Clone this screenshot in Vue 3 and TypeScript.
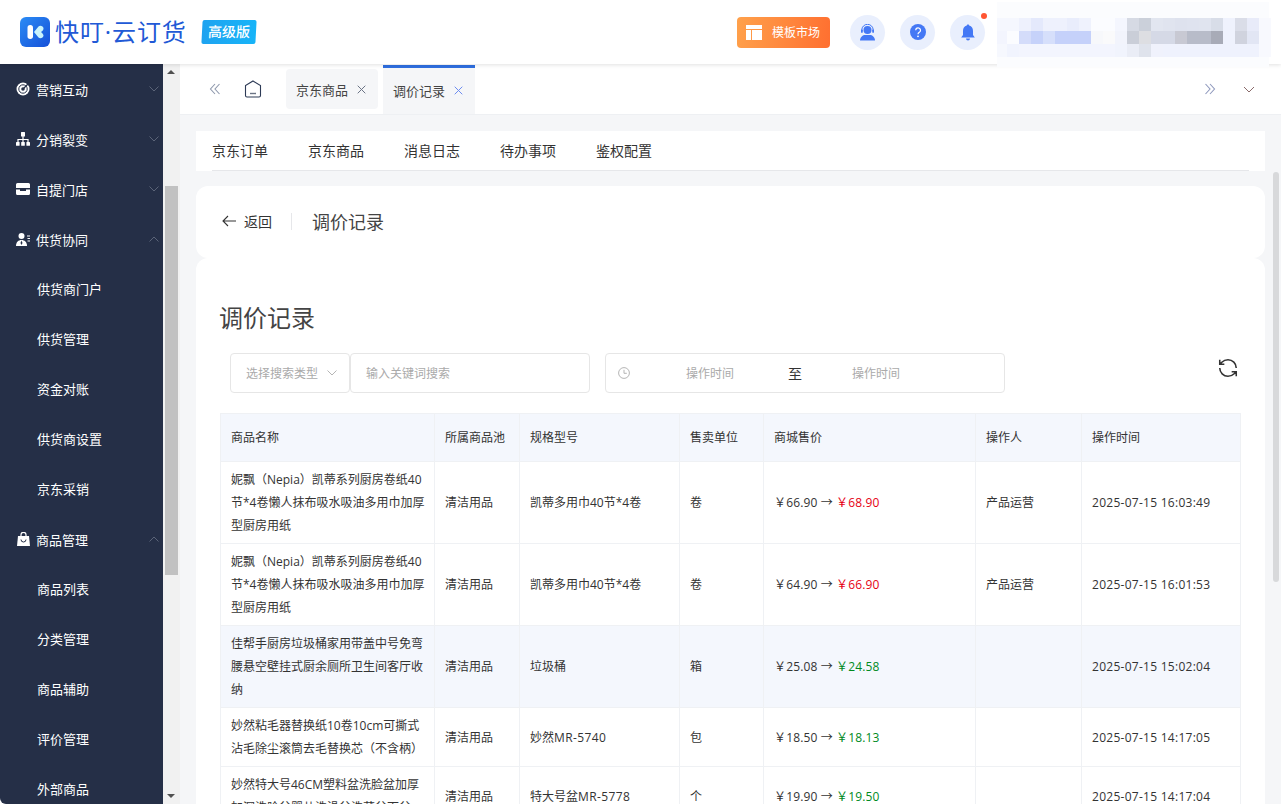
<script setup lang="ts">
interface MenuItem { label: string; icon?: string; open?: boolean }
interface Row { name: string; pool: string; spec: string; model?: string; unit: string; from: string; to: string; up: boolean; op: string; time: string; hl?: boolean }

const menu: MenuItem[] = [
  { label: '营销互动', icon: 'target' },
  { label: '分销裂变', icon: 'tree' },
  { label: '自提门店', icon: 'store' },
  { label: '供货协同', icon: 'user', open: true },
  { label: '供货商门户' },
  { label: '供货管理' },
  { label: '资金对账' },
  { label: '供货商设置' },
  { label: '京东采销' },
  { label: '商品管理', icon: 'bag', open: true },
  { label: '商品列表' },
  { label: '分类管理' },
  { label: '商品辅助' },
  { label: '评价管理' },
  { label: '外部商品' },
]

const subnav = ['京东订单', '京东商品', '消息日志', '待办事项', '鉴权配置']
const heads = ['商品名称', '所属商品池', '规格型号', '售卖单位', '商城售价', '操作人', '操作时间']
const colWidths = [214, 85, 160, 84, 212, 106, 159]

const nepia = '妮飘（Nepia）凯蒂系列厨房卷纸40节*4卷懒人抹布吸水吸油多用巾加厚型厨房用纸'
const rows: Row[] = [
  { name: nepia, pool: '清洁用品', spec: '凯蒂多用巾40节*4卷', unit: '卷', from: '66.90', to: '68.90', up: true, op: '产品运营', time: '2025-07-15 16:03:49' },
  { name: nepia, pool: '清洁用品', spec: '凯蒂多用巾40节*4卷', unit: '卷', from: '64.90', to: '66.90', up: true, op: '产品运营', time: '2025-07-15 16:01:53' },
  { name: '佳帮手厨房垃圾桶家用带盖中号免弯腰悬空壁挂式厨余厕所卫生间客厅收纳', pool: '清洁用品', spec: '垃圾桶', unit: '箱', from: '25.08', to: '24.58', up: false, op: '', time: '2025-07-15 15:02:04', hl: true },
  { name: '妙然粘毛器替换纸10卷10cm可撕式沾毛除尘滚筒去毛替换芯（不含柄）', pool: '清洁用品', spec: '妙然', model: 'MR-5740', unit: '包', from: '18.50', to: '18.13', up: false, op: '', time: '2025-07-15 14:17:05' },
  { name: '妙然特大号46CM塑料盆洗脸盆加厚加深洗脸盆婴儿洗澡盆洗菜盆面盆', pool: '清洁用品', spec: '特大号盆', model: 'MR-5778', unit: '个', from: '19.90', to: '19.50', up: false, op: '', time: '2025-07-15 14:17:04' },
]

const mosaic: string[][] = [
  ['#f5f7fe', '#f5f7fe', '#eef1fd', '#e4e9fc', '#eef1fd', '#eef1fd', '#e9edfc', '#eff2fd', '#fbfcff', '#fbfcff', '#f4f6fe', '#d6dae4', '#cbd0da', '#e2e6f0', '#e0e4ef', '#dee2ee', '#dfe3ef', '#e0e4ef', '#d8dde8', '#eff2fd', '#dadde8', '#e8ebf9', '#f8f9fe'],
  ['#f3f5fe', '#fbfcff', '#d4dcfa', '#c6d2fa', '#d6dffb', '#c5d1fa', '#c5d1fa', '#c5d1fa', '#f7f8fb', '#fafafb', '#f2f4fc', '#caced8', '#dddee2', '#d5d9e6', '#d5d9e6', '#c8c9d3', '#b8bcc9', '#b8bcc9', '#a8abb7', '#eff2fd', '#d0d3de', '#e2e6f4', '#f8f9fe'],
  ['#f6f8fe', '#f1f4fe', '#f3f5fe', '#f3f5fe', '#f3f5fe', '#f3f5fe', '#f3f5fe', '#f3f5fe', '#f3f5fe', '#f3f5fe', '#f1f4fd', '#eaedf6', '#dfe3ec', '#f0f2fc', '#eff2fd', '#eff2fd', '#eff2fd', '#eff2fd', '#eff2fd', '#eff2fd', '#eff2fd', '#eff2fd', '#f8f9fe'],
]
</script>

<template>
  <div class="app">
    <header class="topbar">
      <div class="brand">
        <svg class="logo" viewBox="0 0 30 30">
          <defs>
            <linearGradient id="lg" x1="0" y1="0" x2="1" y2="1">
              <stop offset="0" stop-color="#2b8cf5" />
              <stop offset="1" stop-color="#1550d8" />
            </linearGradient>
          </defs>
          <rect width="30" height="30" rx="6" fill="url(#lg)" />
          <rect x="7.500" y="8" width="5.500" height="14" rx="2.700" fill="#fff" />
          <path d="M14 15 L18.500 9.500 C20 8 23.500 9 23.500 11.500 C23.500 12.500 23 13.200 22.300 14 L21 15 L22.300 16.200 C23 17 23.500 17.700 23.500 18.600 C23.500 21 20 22 18.500 20.500 Z" fill="#c9f3fb" />
        </svg>
        <span class="brand-name">快叮·云订货</span>
        <span class="badge">高级版</span>
      </div>
      <div class="top-actions">
        <button class="market">
          <svg width="16" height="15" viewBox="0 0 16 15"><path d="M0 0h16v4H0zM0 5h5v10H0zM6 5h10v10H6z" fill="#fff" /></svg>
          <span>模板市场</span>
        </button>
        <span class="circle">
          <svg width="17" height="17" viewBox="0 0 17 17">
            <circle cx="8.500" cy="6" r="4" fill="#4478f5" />
            <path d="M2.800 7V6a5.700 5.700 0 0 1 11.400 0v1" fill="none" stroke="#4478f5" stroke-width="1" />
            <rect x="2" y="5.500" width="1.800" height="3.400" rx=".8" fill="#4478f5" />
            <rect x="13.200" y="5.500" width="1.800" height="3.400" rx=".8" fill="#4478f5" />
            <path d="M1 16.500c0-3.500 3-5.500 5-5.500h5c2 0 5 2 5 5.500z" fill="#4478f5" />
          </svg>
        </span>
        <span class="circle">
          <svg width="16" height="16" viewBox="0 0 16 16">
            <circle cx="8" cy="8" r="8" fill="#4478f5" />
            <path d="M5.700 6.200A2.400 2.400 0 1 1 9.300 8.300C8.400 8.800 8 9.300 8 10.300" fill="none" stroke="#fff" stroke-width="1.200" />
            <circle cx="8" cy="12.300" r=".9" fill="#fff" />
          </svg>
        </span>
        <span class="circle bell">
          <svg width="14" height="17" viewBox="0 0 14 17">
            <path d="M7 0.500c.8 0 1.200.5 1.200 1.100C10.800 2.200 12 4.500 12 7v4l1.800 2.500H.2L2 11V7c0-2.500 1.200-4.800 3.800-5.400C5.800 1 6.200.5 7 .5z" fill="#4478f5" />
            <path d="M5 14.500h4a2 2 0 0 1-4 0z" fill="#4478f5" />
          </svg>
          <i class="dot"></i>
        </span>
      </div>
      <div class="blurred">
        <div v-for="(row, r) in mosaic" :key="r" class="mosaic-row">
          <i v-for="(c, i) in row" :key="i" :style="{ background: c }"></i>
        </div>
      </div>
    </header>

    <div class="body">
      <aside class="sidebar">
        <div
          v-for="m in menu"
          :key="m.label"
          class="menu-item"
          :class="{ sub: !m.icon }"
        >
          <span v-if="m.icon" class="m-icon">
            <svg v-if="m.icon === 'target'" width="14" height="14" viewBox="0 0 14 14">
              <circle cx="7" cy="7" r="6.500" fill="#fff" />
              <circle cx="7" cy="7" r="4.200" fill="none" stroke="#252f47" stroke-width="1" />
              <circle cx="7" cy="7" r="1.800" fill="#252f47" />
              <path d="M7 7l5-5" stroke="#252f47" stroke-width="1.200" />
            </svg>
            <svg v-else-if="m.icon === 'tree'" width="14" height="14" viewBox="0 0 14 14">
              <rect x="5" y="0" width="4" height="4.500" rx=".6" fill="#fff" />
              <path d="M7 4v3M2 10V7.500h10V10M7 7v3" fill="none" stroke="#fff" stroke-width="1.200" />
              <rect x="0" y="10" width="3.600" height="3.800" rx=".6" fill="#fff" />
              <rect x="5.200" y="10" width="3.600" height="3.800" rx=".6" fill="#fff" />
              <rect x="10.400" y="10" width="3.600" height="3.800" rx=".6" fill="#fff" />
            </svg>
            <svg v-else-if="m.icon === 'store'" width="14" height="12" viewBox="0 0 14 12">
              <path d="M1.500 0h11A1.500 1.500 0 0 1 14 1.500V5H0V1.500A1.500 1.500 0 0 1 1.500 0z" fill="#fff" />
              <path d="M0 6.500h4v1.500h6V6.500h4V10.500A1.500 1.500 0 0 1 12.500 12h-11A1.500 1.500 0 0 1 0 10.500z" fill="#fff" />
            </svg>
            <svg v-else-if="m.icon === 'user'" width="14" height="13" viewBox="0 0 14 13">
              <circle cx="5.500" cy="3" r="3" fill="#fff" />
              <path d="M0 13c0-4 2.500-6 5.500-6s5.500 2 5.500 6z" fill="#fff" />
              <path d="M5.500 7.500l-1 2.500 1 2 1-2z" fill="#252f47" />
              <path d="M11 3h3M11.500 5.500H14M11.500 8H14" stroke="#fff" stroke-width="1" />
            </svg>
            <svg v-else width="13" height="14" viewBox="0 0 13 14">
              <path d="M1 4h11l1 10H0z" fill="#fff" />
              <path d="M4 4V2.800a2.500 2.500 0 0 1 5 0V4" fill="none" stroke="#fff" stroke-width="1.200" />
              <path d="M4 7.500a2.500 2.500 0 0 0 5 0" fill="none" stroke="#252f47" stroke-width="1" />
            </svg>
          </span>
          <span>{{ m.label }}</span>
          <svg v-if="m.icon" class="m-chev" width="10" height="6" viewBox="0 0 10 6">
            <path :d="m.open ? 'M.5 5.500 5 1l4.500 4.500' : 'M.5.5 5 5 9.500.5'" fill="none" stroke="#5b6478" stroke-width="1" />
          </svg>
        </div>
      </aside>

      <div class="side-scroll">
        <i class="arrow-up"></i>
        <i class="thumb"></i>
        <i class="arrow-down"></i>
      </div>

      <main class="main">
        <nav class="tabs">
          <svg class="tab-ctl first" width="14" height="12" viewBox="0 0 14 12">
            <path d="M7 1 2.500 6 7 11M11.500 1 7 6l4.500 5" fill="none" stroke="#8f99ad" stroke-width="1.100" />
          </svg>
          <svg class="home" width="18" height="18" viewBox="0 0 18 18">
            <path d="M9 1 16.500 5.500v10a1.500 1.500 0 0 1-1.500 1.500H3a1.500 1.500 0 0 1-1.500-1.500v-10z" fill="none" stroke="#2c3a55" stroke-width="1.100" />
            <path d="M6 13.500h6" stroke="#6b7485" stroke-width="1.400" />
          </svg>
          <div class="tab">
            <span>京东商品</span>
            <svg width="9" height="9" viewBox="0 0 9 9"><path d="M.7.7l7.600 7.600M8.300.7.700 8.300" stroke="#6b7485" stroke-width="1" /></svg>
          </div>
          <div class="tab active">
            <span>调价记录</span>
            <svg width="9" height="9" viewBox="0 0 9 9"><path d="M.7.7l7.600 7.600M8.300.7.700 8.300" stroke="#6d8cf0" stroke-width="1" /></svg>
          </div>
          <div class="tab-right">
            <svg width="14" height="12" viewBox="0 0 14 12">
              <path d="M2.500 1 7 6l-4.500 5M7 1l4.500 5L7 11" fill="none" stroke="#8f99bd" stroke-width="1.100" />
            </svg>
            <svg width="12" height="7" viewBox="0 0 12 7">
              <path d="M1 1l5 5 5-5" fill="none" stroke="#8a6a6a" stroke-width="1" />
            </svg>
          </div>
        </nav>

        <div class="scroll">
          <div class="subnav">
            <a v-for="s in subnav" :key="s">{{ s }}</a>
          </div>

          <section class="page-head">
            <svg class="back" width="14" height="12" viewBox="0 0 14 12">
              <path d="M6 1 1 6l5 5M1 6h13" fill="none" stroke="#333" stroke-width="1.100" />
            </svg>
            <span class="back-text">返回</span>
            <i class="sep"></i>
            <span class="head-title">调价记录</span>
          </section>

          <section class="panel">
            <h1 class="panel-title">调价记录</h1>
            <div class="filters">
              <div class="field select">
                <span>选择搜索类型</span>
                <svg width="10" height="6" viewBox="0 0 10 6"><path d="M.5.500 5 5 9.500.500" fill="none" stroke="#b5b5b5" stroke-width="1" /></svg>
              </div>
              <div class="field keyword"><span>输入关键词搜索</span></div>
              <div class="field date">
                <svg class="clock" width="12" height="12" viewBox="0 0 12 12">
                  <circle cx="6" cy="6" r="5.400" fill="none" stroke="#b5b5b5" stroke-width="1" />
                  <path d="M6 2.800V6.300h2.800" fill="none" stroke="#b5b5b5" stroke-width="1" />
                </svg>
                <span class="d-a">操作时间</span>
                <span class="d-to">至</span>
                <span class="d-b">操作时间</span>
              </div>
              <svg class="refresh" width="22" height="22" viewBox="0 0 24 24">
                <path d="M21 12a9 9 0 0 0-9-9 9.750 9.750 0 0 0-6.740 2.740L3 8M3 3v5h5M3 12a9 9 0 0 0 9 9 9.750 9.750 0 0 0 6.740-2.740L21 16M16 16h5v5" fill="none" stroke="#333" stroke-width="1.700" />
              </svg>
            </div>

            <table class="grid">
              <colgroup>
                <col v-for="(w, i) in colWidths" :key="i" :style="{ width: w + 'px' }" />
              </colgroup>
              <thead>
                <tr><th v-for="h in heads" :key="h">{{ h }}</th></tr>
              </thead>
              <tbody>
                <tr v-for="(r, i) in rows" :key="i" :class="{ hl: r.hl }">
                  <td class="name">{{ r.name }}</td>
                  <td>{{ r.pool }}</td>
                  <td>{{ r.spec }}<span v-if="r.model" class="wide">{{ r.model }}</span></td>
                  <td>{{ r.unit }}</td>
                  <td class="price">￥{{ r.from }} → <span :class="r.up ? 'up' : 'down'">￥{{ r.to }}</span></td>
                  <td>{{ r.op }}</td>
                  <td class="time">{{ r.time }}</td>
                </tr>
              </tbody>
            </table>
          </section>
        </div>
        <i class="main-thumb"></i>
      </main>
    </div>
  </div>
</template>

<style>
html, body { margin: 0; padding: 0; overflow: hidden; background: #fff; }
</style>

<style scoped>
.app {
  width: 1281px;
  height: 804px;
  overflow: hidden;
  display: flex;
  flex-direction: column;
  font-family: "Open Sans", "Noto Sans CJK SC", sans-serif;
  color: #333;
  font-size: 12px;
}
.topbar {
  position: relative;
  z-index: 3;
  height: 64px;
  flex: none;
  background: #fff;
  box-shadow: 0 1px 4px rgba(0, 0, 0, .12);
  display: flex;
  align-items: center;
}
.brand { display: flex; align-items: center; padding-left: 20px; }
.logo { width: 30px; height: 30px; }
.brand-name { margin-left: 5px; font-size: 24px; letter-spacing: .9px; color: #2159d6; line-height: 30px; }
.badge {
  margin-left: 15px;
  width: 54px;
  height: 24px;
  line-height: 24px;
  text-align: center;
  color: #fff;
  font-size: 14px;
  font-weight: 500;
  background: linear-gradient(90deg, #1ea3f0, #17b4f8);
  border-radius: 2px;
  transform: skewX(-3deg);
}
.top-actions { position: absolute; left: 737px; top: 0; height: 64px; display: flex; align-items: center; }
.market {
  width: 93px;
  height: 31px;
  border: 0;
  border-radius: 4px;
  background: linear-gradient(100deg, #ffa14b, #ff6f30);
  color: #fff;
  font: inherit;
  font-size: 12px;
  display: flex;
  align-items: center;
  padding: 0 0 0 9px;
  gap: 10px;
  margin-right: 20px;
}
.circle {
  position: relative;
  width: 35px;
  height: 35px;
  border-radius: 50%;
  background: #e9effd;
  display: flex;
  align-items: center;
  justify-content: center;
  margin-right: 15px;
}
.dot { position: absolute; right: -2px; top: -2px; width: 6px; height: 6px; border-radius: 50%; background: #ff5533; }
.blurred {
  position: absolute;
  left: 997px;
  top: 2px;
  width: 272px;
  height: 65px;
  background: #fbfcfe;
  padding-top: 16px;
  box-sizing: border-box;
}
.mosaic-row { display: flex; height: 13px; }
.mosaic-row i { width: 12px; flex: none; }
.mosaic-row i:first-child { width: 10px; }

.body { flex: 1; display: flex; min-height: 0; }
.sidebar {
  width: 163px;
  flex: none;
  background: #252f47;
  overflow: hidden;
  border-bottom-left-radius: 6px;
  color: #fff;
  font-size: 13px;
}
.menu-item {
  height: 50px;
  box-sizing: border-box;
  display: flex;
  align-items: center;
  padding: 0 4px 0 16px;
}
.menu-item.sub { padding-left: 37px; padding-bottom: 2px; }
.m-icon { width: 14px; margin-right: 6px; display: flex; align-items: center; justify-content: center; }
.m-chev { margin-left: auto; }
.side-scroll { width: 17px; flex: none; background: #f1f1f1; position: relative; }
.thumb { position: absolute; left: 2px; width: 13px; top: 122px; height: 389px; background: #c1c1c1; }
.arrow-up, .arrow-down { position: absolute; left: 4px; width: 0; height: 0; border-left: 4px solid transparent; border-right: 4px solid transparent; }
.arrow-up { top: 6px; border-bottom: 4px solid #505050; }
.arrow-down { bottom: 6px; border-top: 4px solid #505050; }

.main { flex: 1; min-width: 0; position: relative; background: #f5f6f8; display: flex; flex-direction: column; }
.tabs {
  height: 51px;
  flex: none;
  background: #fff;
  border-bottom: 1px solid #eef0f3;
  box-sizing: border-box;
  display: flex;
  align-items: center;
}
.tab-ctl.first { margin-left: 28px; }
.home { margin-left: 22px; margin-right: 24px; }
.tab {
  width: 92px;
  height: 40px;
  box-sizing: border-box;
  padding: 0 0 0 10px;
  display: flex;
  align-items: center;
  gap: 9px;
  background: #f5f6f8;
  border-radius: 4px;
  font-size: 13px;
  color: #444;
  margin-right: 5px;
}
.tab.active {
  height: 49px;
  align-self: flex-end;
  border-radius: 0;
  border-top: 3px solid #2f6fe0;
  padding-bottom: 2px;
}
.tab-right { margin-left: auto; padding-right: 26px; display: flex; align-items: center; gap: 26px; }

.scroll { flex: 1; min-height: 0; overflow: hidden; padding: 16px 16px 0; }
.subnav {
  height: 40px;
  box-sizing: border-box;
  background: #fff;
  display: flex;
  align-items: center;
  gap: 40px;
  padding: 0 16px 2px;
  font-size: 14px;
  color: #333;
  position: relative;
  margin-bottom: 15px;
}
.subnav::after { content: ""; position: absolute; left: 16px; right: 16px; bottom: 0; height: 1px; background: #e6e7ea; }
.page-head {
  height: 72px;
  box-sizing: border-box;
  background: #fff;
  border-radius: 12px;
  display: flex;
  align-items: center;
  padding: 0 0 2px 26px;
}
.back-text { margin-left: 8px; font-size: 14px; }
.sep { width: 1px; height: 17px; background: #e6e7ea; margin: 0 20px 0 19px; }
.head-title { font-size: 18px; color: #444; }
.panel {
  background: #fff;
  border-radius: 12px;
  padding: 43px 24px 0;
}
.panel-title { margin: 0 0 18px -1px; font-size: 24px; font-weight: 400; line-height: 34px; color: #444; }
.filters { display: flex; align-items: center; height: 40px; margin-bottom: 20px; padding-left: 10px; color: #aaa; }
.field {
  height: 40px;
  box-sizing: border-box;
  border: 1px solid #e6e6e6;
  border-radius: 4px;
  display: flex;
  align-items: center;
}
.select { width: 120px; padding-left: 15px; gap: 9px; }
.keyword { width: 240px; padding-left: 15px; }
.date { width: 400px; margin-left: 15px; padding-left: 12px; }
.d-a { margin-left: 56px; }
.d-to { margin-left: 54px; font-size: 14px; color: #333; }
.d-b { margin-left: 50px; }
.refresh { margin-left: auto; margin-right: 2px; margin-top: -10px; }
.grid {
  width: 1020px;
  table-layout: fixed;
  border-collapse: collapse;
  font-size: 12px;
  line-height: 23px;
  color: #333;
}
.grid th, .grid td { border: 1px solid #eff1f4; padding: 6px 10px; text-align: left; font-weight: 400; vertical-align: middle; word-break: break-all; }
.grid td.name { padding-right: 8px; }
.grid th { height: 35px; background: #f4f7fd; }
.grid tr.hl td { background: #f4f7fd; }
.price { white-space: nowrap; letter-spacing: .14px; }
.time { letter-spacing: .27px; white-space: nowrap; }
.wide { letter-spacing: .4px; }
.up { color: #e60012; }
.down { color: #008a1e; }
.main-thumb { position: absolute; left: 1093px; top: 108px; width: 6px; height: 410px; border-radius: 3px; background: #d8d9db; }
</style>
